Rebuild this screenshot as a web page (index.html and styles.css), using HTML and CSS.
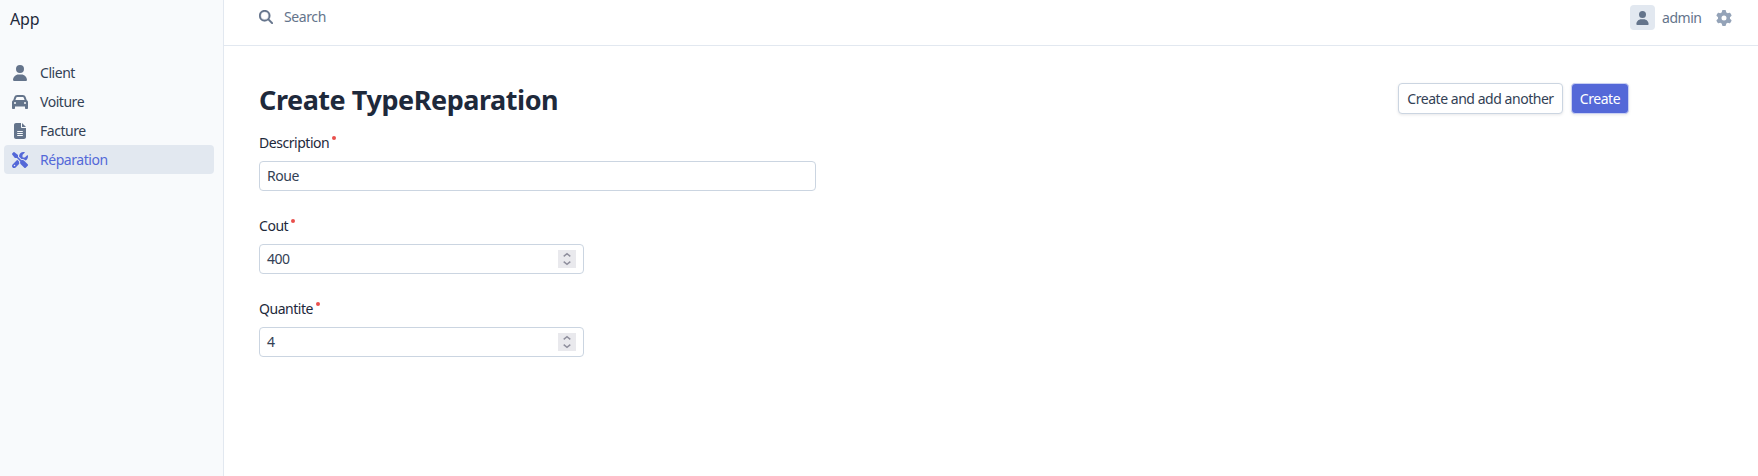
FILE: index.html
```html
<!DOCTYPE html>
<html lang="fr">
<head>
<meta charset="utf-8">
<title>Create TypeReparation</title>
<link rel="stylesheet" href="styles.css">
</head>
<body>
<div class="wrapper">
  <aside class="sidebar">
    <a class="logo"><span>App</span></a>
    <nav class="menu">
      <a class="menu-item"><svg class="menu-icon" viewBox="-32 0 512 512"><path d="M224 256A128 128 0 1 0 224 0a128 128 0 1 0 0 256zm-45.7 48C79.8 304 0 383.8 0 482.3C0 498.7 13.3 512 29.7 512H418.3c16.4 0 29.7-13.3 29.7-29.7C448 383.8 368.2 304 269.7 304H178.3z"/></svg><span>Client</span></a>
      <a class="menu-item"><svg class="menu-icon" viewBox="0 0 512 512"><path d="M135.2 117.4L109.1 192H402.9l-26.1-74.6C372.3 104.6 360.2 96 346.6 96H165.4c-13.6 0-25.7 8.6-30.2 21.4zM39.6 196.8L74.8 96.3C88.3 57.8 124.6 32 165.4 32H346.6c40.8 0 77.1 25.8 90.6 64.3l35.2 100.5c23.2 9.6 39.6 32.5 39.6 59.2V400v48c0 17.7-14.3 32-32 32H448c-17.7 0-32-14.3-32-32V400H96v48c0 17.7-14.3 32-32 32H32c-17.7 0-32-14.3-32-32V400 256c0-26.7 16.4-49.6 39.6-59.2zM128 288a32 32 0 1 0 -64 0 32 32 0 1 0 64 0zm288 32a32 32 0 1 0 0-64 32 32 0 1 0 0 64z"/></svg><span>Voiture</span></a>
      <a class="menu-item"><svg class="menu-icon" viewBox="-64 0 512 512"><path d="M64 0C28.7 0 0 28.7 0 64V448c0 35.3 28.7 64 64 64H320c35.3 0 64-28.7 64-64V160H256c-17.7 0-32-14.3-32-32V0H64zM256 0V128H384L256 0zM112 256H272c8.8 0 16 7.2 16 16s-7.2 16-16 16H112c-8.8 0-16-7.2-16-16s7.2-16 16-16zm0 64H272c8.8 0 16 7.2 16 16s-7.2 16-16 16H112c-8.8 0-16-7.2-16-16s7.2-16 16-16zm0 64H272c8.8 0 16 7.2 16 16s-7.2 16-16 16H112c-8.8 0-16-7.2-16-16s7.2-16 16-16z"/></svg><span>Facture</span></a>
      <a class="menu-item active"><svg class="menu-icon" viewBox="0 0 512 512"><path d="M78.6 5C69.1-2.4 55.6-1.5 47 7L7 47c-8.5 8.5-9.4 22-2.1 31.6l80 104c4.5 5.9 11.6 9.4 19 9.4h54.1l109 109c-14.7 29-10 65.4 14.3 89.6l112 112c12.5 12.5 32.8 12.5 45.3 0l64-64c12.5-12.5 12.5-32.8 0-45.3l-112-112c-24.2-24.2-60.6-29-89.6-14.3l-109-109V104c0-7.5-3.5-14.5-9.4-19L78.6 5zM19.9 396.1C7.2 408.8 0 426.1 0 444.1C0 481.6 30.4 512 67.9 512c18 0 35.3-7.2 48-19.9L233.7 374.3c-7.8-20.9-9-43.6-3.6-65.1l-61.7-61.7L19.9 396.1zM512 144c0-10.5-1.1-20.7-3.2-30.5c-2.4-11.2-16.1-14.1-24.2-6l-63.9 63.9c-3 3-7.1 4.7-11.3 4.7H352c-8.8 0-16-7.2-16-16V102.6c0-4.2 1.7-8.3 4.7-11.3l63.9-63.9c8.1-8.1 5.2-21.8-6-24.2C388.7 1.1 378.5 0 368 0C288.5 0 224 64.5 224 144l0 .8 85.3 85.3c36-9.1 75.8 .5 104 28.7L429 274.5c49-23 83-72.8 83-130.5zM56 432a24 24 0 1 1 48 0 24 24 0 1 1 -48 0z"/></svg><span>Réparation</span></a>
    </nav>
  </aside>
  <div class="main">
    <header class="topbar">
      <div class="search">
        <svg class="search-icon" viewBox="0 0 512 512"><path d="M416 208c0 45.9-14.9 88.3-40 122.7L502.6 457.4c12.5 12.5 12.5 32.8 0 45.3s-32.8 12.5-45.3 0L330.7 376c-34.4 25.2-76.8 40-122.7 40C93.1 416 0 322.9 0 208S93.1 0 208 0S416 93.1 416 208zM208 352a144 144 0 1 0 0-288 144 144 0 1 0 0 288z"/></svg>
        <span>Search</span>
      </div>
      <div class="user">
        <span class="avatar"><svg class="avatar-icon" viewBox="0 0 448 512"><path d="M224 256A128 128 0 1 0 224 0a128 128 0 1 0 0 256zm-45.7 48C79.8 304 0 383.8 0 482.3C0 498.7 13.3 512 29.7 512H418.3c16.4 0 29.7-13.3 29.7-29.7C448 383.8 368.2 304 269.7 304H178.3z"/></svg></span>
        <span class="user-name">admin</span>
        <svg class="gear" viewBox="0 0 512 512"><path d="M495.9 166.6c3.2 8.7 .5 18.4-6.4 24.6l-43.3 39.4c1.1 8.3 1.7 16.8 1.7 25.4s-.6 17.1-1.7 25.4l43.3 39.4c6.9 6.2 9.6 15.9 6.4 24.6c-4.4 11.9-9.7 23.3-15.8 34.3l-4.7 8.1c-6.6 11-14 21.4-22.1 31.2c-5.9 7.2-15.7 9.6-24.5 6.8l-55.7-17.7c-13.4 10.3-28.2 18.9-44 25.4l-12.5 57.1c-2 9.1-9 16.3-18.2 17.8c-13.8 2.3-28 3.5-42.5 3.5s-28.7-1.2-42.5-3.5c-9.2-1.5-16.2-8.7-18.2-17.8l-12.5-57.1c-15.8-6.5-30.6-15.1-44-25.4L83.1 425.9c-8.8 2.8-18.6 .3-24.5-6.8c-8.1-9.8-15.5-20.2-22.1-31.2l-4.7-8.1c-6.1-11-11.4-22.4-15.8-34.3c-3.2-8.7-.5-18.4 6.4-24.6l43.3-39.4C64.6 273.1 64 264.6 64 256s.6-17.1 1.7-25.4L22.4 191.2c-6.9-6.2-9.6-15.9-6.4-24.6c4.4-11.9 9.7-23.3 15.8-34.3l4.7-8.1c6.6-11 14-21.4 22.1-31.2c5.9-7.2 15.7-9.6 24.5-6.8l55.7 17.7c13.4-10.3 28.2-18.9 44-25.4l12.5-57.1c2-9.1 9-16.3 18.2-17.8C227.3 1.2 241.5 0 256 0s28.7 1.2 42.5 3.5c9.2 1.5 16.2 8.7 18.2 17.8l12.5 57.1c15.8 6.5 30.6 15.1 44 25.4l55.7-17.7c8.8-2.8 18.6-.3 24.5 6.8c8.1 9.8 15.5 20.2 22.1 31.2l4.7 8.1c6.1 11 11.4 22.4 15.8 34.3zM256 336a80 80 0 1 0 0-160 80 80 0 1 0 0 160z"/></svg>
      </div>
    </header>
    <main class="content">
      <div class="heading">
        <h1 class="title">Create TypeReparation</h1>
        <div class="actions">
          <button class="btn btn-secondary">Create and add another</button>
          <button class="btn btn-primary">Create</button>
        </div>
      </div>
      <form class="form">
        <div class="field">
          <div class="label"><span>Description</span><i class="required"></i></div>
          <div class="control wide"><span>Roue</span></div>
        </div>
        <div class="field">
          <div class="label"><span>Cout</span><i class="required"></i></div>
          <div class="control"><span>400</span><svg class="spinner" viewBox="0 0 18 18"><path d="M5.7 6.4 9 3.6l3.3 2.8M5.7 11.6 9 14.4l3.3-2.8"/></svg></div>
        </div>
        <div class="field">
          <div class="label"><span>Quantite</span><i class="required"></i></div>
          <div class="control"><span>4</span><svg class="spinner" viewBox="0 0 18 18"><path d="M5.7 6.4 9 3.6l3.3 2.8M5.7 11.6 9 14.4l3.3-2.8"/></svg></div>
        </div>
      </form>
    </main>
  </div>
</div>
</body>
</html>
```
FILE: styles.css
```css
* { box-sizing: border-box; }
body {
  margin: 0;
  background: #fff;
  color: #1e293b;
  font: 14px/20px "Segoe UI", "Noto Sans", sans-serif;
  letter-spacing: -0.46px;
}
svg { display: block; flex: none; fill: currentColor; }
.wrapper { display: flex; height: 476px; overflow: hidden; }

.sidebar {
  flex: none;
  width: 224px;
  padding: 0 9px 0 4px;
  background: #f8fafc;
  border-right: 1px solid #e2e8f0;
}
.logo { display: flex; height: 58px; padding: 8px 0 0 6px; font-size: 16px; line-height: 22px; letter-spacing: -0.2px; }
.menu-item {
  display: flex;
  align-items: center;
  height: 29px;
  padding-left: 8px;
  gap: 12px;
  color: #334155;
  border-radius: 4px;
}
.menu-icon { width: 16px; height: 16px; color: #64748b; }
.menu-item.active { background: #e2e8f0; color: #5468d8; }
.active .menu-icon { color: #5468d8; }

.main { flex: 1; min-width: 0; }
.topbar {
  display: flex;
  justify-content: space-between;
  height: 46px;
  padding: 5px 26px 15px 35px;
  border-bottom: 1px solid #e2e8f0;
  color: #64748b;
}
.search { display: flex; align-items: center; gap: 11px; height: 24px; letter-spacing: -0.4px; }
.search-icon { width: 14px; height: 14px; stroke: currentColor; stroke-width: 10; }
.user { display: flex; align-items: center; height: 25px; }
.avatar {
  display: grid;
  place-items: center;
  width: 25px;
  height: 25px;
  border-radius: 4px;
  background: #e2e8f0;
}
.avatar-icon { width: 13px; height: 14px; }
.user-name { width: 39px; margin: 0 15px 0 7px; }
.gear { width: 16px; height: 16px; color: #94a3b8; }

.content { padding: 37px 129px 0 35px; }
.heading { display: flex; justify-content: space-between; height: 50px; }
.title { margin: 0; font-size: 27px; line-height: 34px; font-weight: 700; letter-spacing: -0.45px; }
.actions { display: flex; gap: 8px; }
.btn {
  height: 31px;
  padding: 0;
  border: 1px solid #cbd5e1;
  border-radius: 4px;
  background: #fff;
  color: #334155;
  font: inherit;
  letter-spacing: inherit;
  white-space: nowrap;
  box-shadow: 0 1px 3px rgba(15, 23, 42, .1);
}
.btn-secondary { width: 165px; }
.btn-primary { width: 58px; background: #5468d8; border-color: #c9d0f3; color: #fff; }

.field { height: 83px; }
.label { display: flex; height: 28px; }
.required { width: 4px; height: 4px; margin: 3px 0 0 3px; border-radius: 50%; background: #e9504c; }
.control {
  display: flex;
  align-items: center;
  justify-content: space-between;
  width: 325px;
  height: 30px;
  padding: 0 7px;
  border: 1px solid #cbd5e1;
  border-radius: 4px;
  color: #334155;
}
.control.wide { width: 557px; }
.spinner { width: 18px; height: 18px; margin-top: -1px; background: #e9e9ed; fill: none; stroke: #8f8f9d; stroke-width: 1.4; }
```
